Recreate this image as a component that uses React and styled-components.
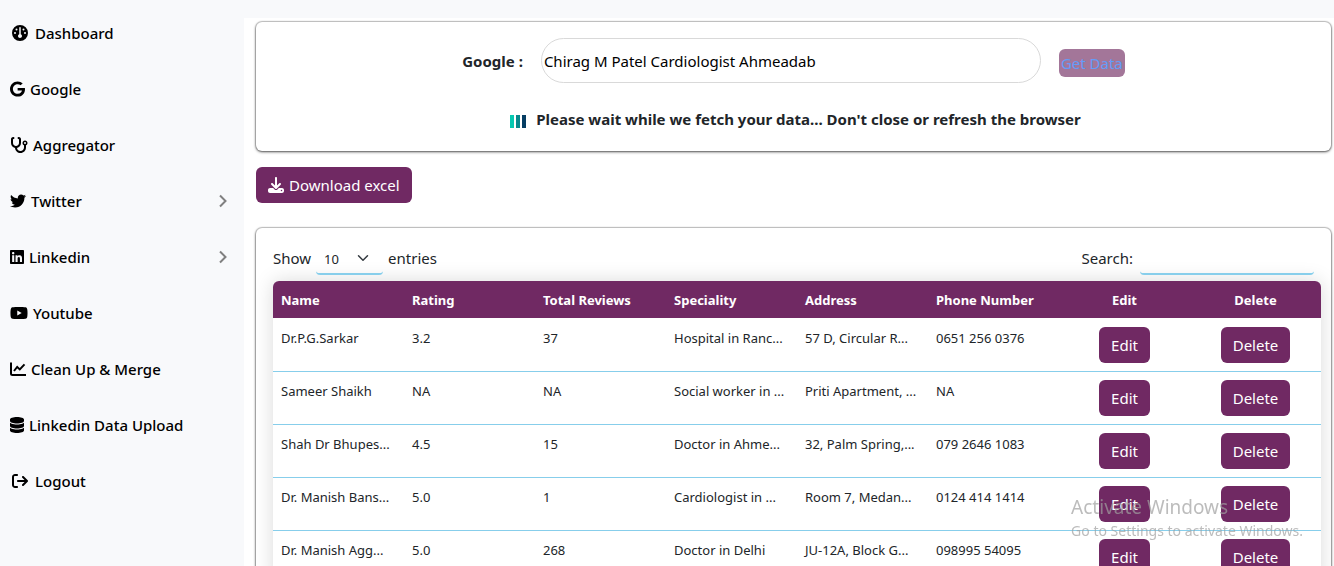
import React from "react";
import styled, { createGlobalStyle, css } from "styled-components";
import {
  FaGauge,
  FaGoogle,
  FaStethoscope,
  FaTwitter,
  FaLinkedin,
  FaYoutube,
  FaDatabase,
  FaArrowRightFromBracket,
  FaDownload,
} from "react-icons/fa6";

const plum = "#702963";
const sky = "#87ceeb";

const GlobalStyle = createGlobalStyle`
  *, *::before, *::after { box-sizing: border-box; }
  body {
    margin: 0;
    background: #f8f9fb;
    color: #212529;
    font-family: "Segoe UI", "Noto Sans", "Open Sans", sans-serif;
    font-size: 15px;
    line-height: 24px;
  }
  button, input, select { font: inherit; }
`;

const Page = styled.div`
  display: grid;
  grid-template-columns: 244px minmax(0, 1fr);
  min-height: 100vh;
`;

const Sidebar = styled.nav`
  padding-top: 5px;
`;

const NavList = styled.ul`
  margin: 0;
  padding: 0;
  list-style: none;
`;

const NavLink = styled.a`
  display: flex;
  align-items: center;
  height: 56px;
  gap: ${(p) => (p.$inset ? 7 : 5)}px;
  padding: 0 16px 0 ${(p) => (p.$inset ? 12 : 10)}px;
  color: #000;
  font-weight: 500;
  text-decoration: none;

  > svg {
    flex: none;
  }
  > svg:first-child {
    width: ${(p) => p.$iconWidth}px;
    height: 16px;
  }
`;

const Chevron = styled.svg`
  margin-left: auto;
  width: 10px;
  height: 14px;
  fill: none;
  stroke: #808080;
  stroke-width: 2;
`;

const Main = styled.main`
  margin-top: 18px;
  padding: 4px 3px 24px 12px;
  background: #fff;
`;

const Card = styled.section`
  border-radius: 6px;
  background: #fff;
  box-shadow: 0 1px 3px 0 rgba(0, 0, 0, 0.6), 0 0 1px 1px rgba(0, 0, 0, 0.2);
`;

const FetchCard = styled(Card)`
  display: flex;
  flex-direction: column;
  align-items: center;
  gap: 24px;
  padding: 16px 16px 20px;
`;

const SearchForm = styled.form`
  display: flex;
  align-items: center;
  gap: 18px;
  max-width: 100%;
`;

const FormLabel = styled.label`
  font-weight: 700;
  white-space: nowrap;
`;

const QueryInput = styled.input`
  width: 500px;
  min-width: 0;
  height: 45px;
  padding: 1px 2px;
  border: 1px solid #d9d9d9;
  border-radius: 24px;
  background: #fff;
  color: #000;
`;

const GetButton = styled.button`
  height: 28px;
  margin-top: 4px;
  padding: 0 2px;
  border: 0;
  border-radius: 6px;
  background: #a37699;
  color: #649cf8;
  white-space: nowrap;
`;

const Notice = styled.p`
  display: flex;
  align-items: center;
  gap: 10px;
  margin: 0;
  padding-left: 4px;
  font-weight: 700;

  > svg {
    margin-top: 4px;
  }
`;

const Button = styled.button`
  display: inline-flex;
  align-items: center;
  gap: 5px;
  height: 36px;
  padding: 0 12px;
  border: 0;
  border-radius: 6px;
  background: ${plum};
  color: #fff;
  vertical-align: top;
  white-space: nowrap;
`;

const Actions = styled.div`
  padding: 16px 0 25px;
`;

const TableCard = styled(Card)`
  padding: 16px 10px 20px 17px;
`;

const Controls = styled.div`
  display: flex;
  justify-content: space-between;
  height: 37px;
  padding-right: 7px;
`;

const ControlLabel = styled.label`
  display: flex;
  align-items: flex-start;
  gap: 5px;
  line-height: 28px;
`;

const underline = css`
  height: 31px;
  border: 0;
  border-bottom: 2px solid ${sky};
  border-radius: 4px;
  background: transparent;
  color: #212529;
  outline: 0;
`;

const SelectBox = styled.span`
  display: grid;
  align-items: center;

  > * {
    grid-area: 1 / 1;
  }
  > svg {
    justify-self: end;
    margin: 0 14px 3px 0;
    pointer-events: none;
  }
`;

const LengthSelect = styled.select`
  ${underline}
  width: 67px;
  padding: 0 8px;
  appearance: none;
  font-size: 13px;
`;

const FilterInput = styled.input`
  ${underline}
  width: 174px;
  margin-left: 2px;
`;

const Table = styled.table`
  width: 100%;
  table-layout: fixed;
  border-collapse: separate;
  border-spacing: 0;
  border-radius: 6px 6px 0 0;
  overflow: hidden;
  background: #fff;
  box-shadow: 0 0 20px rgba(0, 0, 0, 0.15);
  font-size: 13px;
  line-height: 22px;
`;

const HeadCell = styled.th`
  height: 38px;
  padding: 0 8px;
  border-bottom: 1px solid #fff;
  background: ${plum};
  background-clip: padding-box;
  color: #fff;
  font-weight: 700;
  text-align: ${(p) => (p.$center ? "center" : "left")};
  white-space: nowrap;
`;

const Cell = styled.td`
  height: 53px;
  padding: 8px;
  border-bottom: 1px solid ${sky};
  overflow: hidden;
  text-align: ${(p) => (p.$center ? "center" : "left")};
  text-overflow: ellipsis;
  vertical-align: top;
  white-space: nowrap;

  ${Button} {
    font-size: 15px;
  }
`;

const Watermark = styled.aside`
  position: fixed;
  right: 31px;
  bottom: 23px;
  color: rgba(160, 160, 160, 0.7);
  font-size: 14px;
  line-height: 24px;
  pointer-events: none;

  strong {
    display: block;
    font-size: 19px;
    font-weight: 400;
  }
`;

function ChartIcon() {
  return (
    <svg viewBox="0 0 16 16" fill="none" stroke="currentColor" strokeWidth="2" aria-hidden="true">
      <path d="M1 1.5V12.5Q1 14 2.5 14H16" />
      <path d="M4 10 7.2 6 9.8 8.4 14.5 3.4" />
    </svg>
  );
}

const navItems = [
  { label: "Dashboard", Icon: FaGauge, width: 16, inset: true },
  { label: "Google", Icon: FaGoogle, width: 15 },
  { label: "Aggregator", Icon: FaStethoscope, width: 18 },
  { label: "Twitter", Icon: FaTwitter, width: 16, nested: true },
  { label: "Linkedin", Icon: FaLinkedin, width: 14, nested: true },
  { label: "Youtube", Icon: FaYoutube, width: 18 },
  { label: "Clean Up & Merge", Icon: ChartIcon, width: 16 },
  { label: "Linkedin Data Upload", Icon: FaDatabase, width: 14 },
  { label: "Logout", Icon: FaArrowRightFromBracket, width: 16, inset: true },
];

const columns = ["Name", "Rating", "Total Reviews", "Speciality", "Address", "Phone Number"];

const rows = [
  ["Dr.P.G.Sarkar", "3.2", "37", "Hospital in Ranc...", "57 D, Circular R...", "0651 256 0376"],
  ["Sameer Shaikh", "NA", "NA", "Social worker in ...", "Priti Apartment, ...", "NA"],
  ["Shah Dr Bhupes...", "4.5", "15", "Doctor in Ahme...", "32, Palm Spring,...", "079 2646 1083"],
  ["Dr. Manish Bans...", "5.0", "1", "Cardiologist in ...", "Room 7, Medan...", "0124 414 1414"],
  ["Dr. Manish Agg...", "5.0", "268", "Doctor in Delhi", "JU-12A, Block G...", "098995 54095"],
];

function LoadingBars() {
  return (
    <svg width="16" height="14" viewBox="0 0 16 14" aria-hidden="true">
      <rect x="0" y="1" width="4" height="13" fill="#06c9b1" />
      <rect x="6" y="1" width="4" height="13" fill="#08888c" />
      <rect x="12" y="1" width="4" height="13" fill="#063d63" />
    </svg>
  );
}

export default function App() {
  return (
    <>
      <GlobalStyle />
      <Page>
        <Sidebar>
          <NavList>
            {navItems.map(({ label, Icon, width, inset, nested }) => (
              <li key={label}>
                <NavLink href="#" $inset={inset} $iconWidth={width}>
                  <Icon />
                  {label}
                  {nested && (
                    <Chevron viewBox="0 0 10 14">
                      <path d="M2 1.5 7.5 7 2 12.5" />
                    </Chevron>
                  )}
                </NavLink>
              </li>
            ))}
          </NavList>
        </Sidebar>
        <Main>
          <FetchCard>
            <SearchForm onSubmit={(e) => e.preventDefault()}>
              <FormLabel htmlFor="query">Google :</FormLabel>
              <QueryInput id="query" defaultValue="Chirag M Patel Cardiologist Ahmeadab" />
              <GetButton disabled>Get Data</GetButton>
            </SearchForm>
            <Notice>
              <LoadingBars />
              Please wait while we fetch your data... Don't close or refresh the browser
            </Notice>
          </FetchCard>
          <Actions>
            <Button>
              <FaDownload size={16} />
              Download excel
            </Button>
          </Actions>
          <TableCard>
            <Controls>
              <ControlLabel>
                Show
                <SelectBox>
                  <LengthSelect defaultValue="10">
                    <option>10</option>
                    <option>25</option>
                    <option>50</option>
                  </LengthSelect>
                  <svg width="12" height="12" viewBox="0 0 16 16" fill="none" stroke="#343a40" strokeWidth="2" strokeLinecap="round" strokeLinejoin="round">
                    <path d="m2 5 6 6 6-6" />
                  </svg>
                </SelectBox>
                entries
              </ControlLabel>
              <ControlLabel>
                Search:
                <FilterInput type="search" />
              </ControlLabel>
            </Controls>
            <Table>
              <thead>
                <tr>
                  {columns.map((c) => (
                    <HeadCell key={c}>{c}</HeadCell>
                  ))}
                  <HeadCell $center>Edit</HeadCell>
                  <HeadCell $center>Delete</HeadCell>
                </tr>
              </thead>
              <tbody>
                {rows.map((row) => (
                  <tr key={row[0]}>
                    {row.map((value, i) => (
                      <Cell key={columns[i]}>{value}</Cell>
                    ))}
                    <Cell $center>
                      <Button>Edit</Button>
                    </Cell>
                    <Cell $center>
                      <Button>Delete</Button>
                    </Cell>
                  </tr>
                ))}
              </tbody>
            </Table>
          </TableCard>
        </Main>
      </Page>
      <Watermark>
        <strong>Activate Windows</strong>
        Go to Settings to activate Windows.
      </Watermark>
    </>
  );
}
